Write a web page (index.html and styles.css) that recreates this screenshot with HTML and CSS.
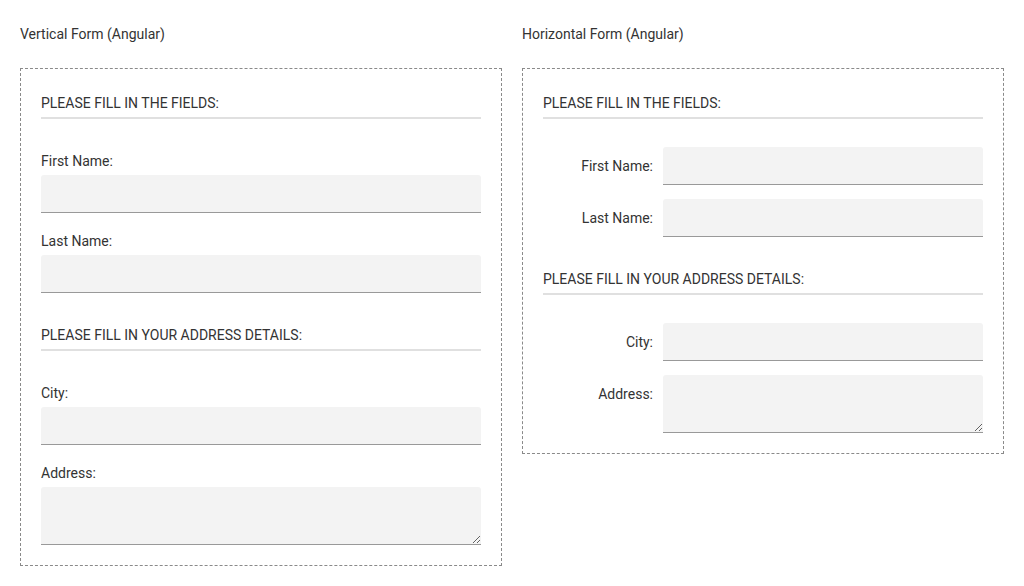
FILE: index.html
```html
<!DOCTYPE html>
<html>
<head>
<meta charset="utf-8">
<link rel="stylesheet" href="styles.css">
</head>
<body>
<div class="page">
  <section class="col">
    <h2 class="title">Vertical Form (Angular)</h2>
    <form class="box vertical">
      <h3 class="legend">PLEASE FILL IN THE FIELDS:</h3>
      <div class="group first">
        <label>First Name:</label>
        <input type="text" class="field">
      </div>
      <div class="group">
        <label>Last Name:</label>
        <input type="text" class="field">
      </div>
      <h3 class="legend mid">PLEASE FILL IN YOUR ADDRESS DETAILS:</h3>
      <div class="group first">
        <label>City:</label>
        <input type="text" class="field">
      </div>
      <div class="group">
        <label>Address:</label>
        <textarea class="field area"></textarea>
      </div>
    </form>
  </section>
  <section class="col">
    <h2 class="title">Horizontal Form (Angular)</h2>
    <form class="box horizontal">
      <h3 class="legend">PLEASE FILL IN THE FIELDS:</h3>
      <div class="row first">
        <label>First Name:</label>
        <input type="text" class="field">
      </div>
      <div class="row">
        <label>Last Name:</label>
        <input type="text" class="field">
      </div>
      <h3 class="legend mid">PLEASE FILL IN YOUR ADDRESS DETAILS:</h3>
      <div class="row first">
        <label>City:</label>
        <input type="text" class="field">
      </div>
      <div class="row">
        <label>Address:</label>
        <textarea class="field area"></textarea>
      </div>
    </form>
  </section>
</div>
</body>
</html>
```
FILE: styles.css
```css
* { box-sizing: border-box; }
html, body { margin: 0; padding: 0; background: #fff; }
body {
  font-family: Roboto, "Liberation Sans", sans-serif;
  font-size: 14px;
  color: #333;
}
.page {
  display: flex;
  gap: 20px;
  padding: 24px 20px 0 20px;
  align-items: flex-start;
}
.col { width: 482px; }
.title {
  margin: 0 0 24px 0;
  font-size: 14px;
  font-weight: 400;
  line-height: 20px;
}
.box {
  border: 1px dashed #8a8a8a;
  padding: 20px;
  margin: 0;
}
.legend {
  margin: 0;
  font-size: 14px;
  font-weight: 400;
  line-height: 20px;
  padding: 4px 0 4px 0;
  border-bottom: 2px solid #e0e0e0;
}
.legend.mid { margin-top: 28px; }
label { display: block; line-height: 20px; }
.field {
  display: block;
  width: 100%;
  height: 38px;
  margin: 0;
  border: none;
  border-bottom: 1px solid #999;
  border-radius: 3px 3px 0 0;
  background: #f3f3f3;
  font-family: inherit;
  font-size: 14px;
  padding: 0 10px;
  outline: none;
}
.area { height: 58px; resize: vertical; padding: 8px 10px; }
.vertical .group { margin-top: 18px; }
.vertical .group.first { margin-top: 32px; }
.vertical .group label { margin-bottom: 4px; }
.horizontal .row {
  display: flex;
  align-items: flex-start;
  gap: 10px;
  margin-top: 14px;
}
.horizontal .row.first { margin-top: 28px; }
.horizontal .row label {
  width: 110px;
  flex: none;
  text-align: right;
  padding-top: 9px;
}
.horizontal .row .field { flex: 1; width: auto; }
```
